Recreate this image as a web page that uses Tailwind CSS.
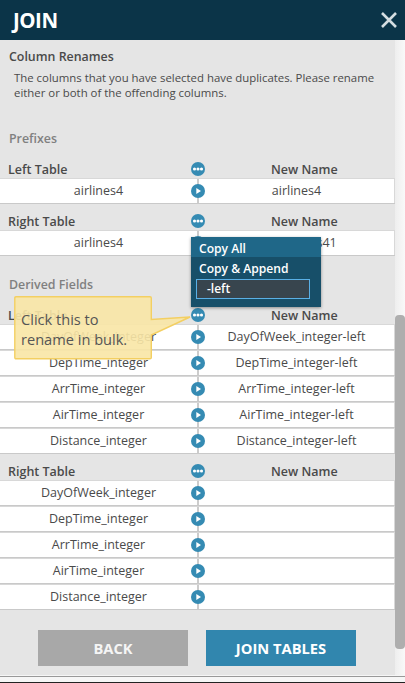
<!DOCTYPE html>
<html lang="en">
<head>
<meta charset="utf-8">
<title>Join</title>
<script src="https://cdn.jsdelivr.net/npm/@tailwindcss/browser@4"></script>
</head>
<body class="w-[405px] h-[683px] overflow-hidden bg-[#f4f4f4] font-['Open_Sans',sans-serif] text-[#4a4a4a]">
<div class="relative flex h-[683px] flex-col overflow-hidden">
  <header class="flex h-10 shrink-0 items-center justify-between bg-[#0b3448] pl-[13px] pr-[8px]">
    <h1 class="text-[20.5px] leading-10 font-bold tracking-[-0.5px] text-white">JOIN</h1>
    <svg class="h-4 w-4" viewBox="0 0 16 16" fill="none" stroke="#d5dde1" stroke-width="2.600"><path d="M1 1 15 15M15 1 1 15"/></svg>
  </header>
  <div class="flex h-[635px] shrink-0">
    <main class="h-[635px] w-[395px] shrink-0 bg-[#e5e5e5]">
      <h2 class="h-[30px] pl-[9px] pt-[7px] text-[12.4px] leading-5 font-semibold">Column Renames</h2>
      <p class="h-[52px] pl-[14px] pt-0 text-[11.4px] leading-[15px] whitespace-nowrap">The columns that you have selected have duplicates. Please rename<br>either or both of the offending columns.</p>
      <h3 class="h-[30px] pl-[9px] pt-[7px] text-[12.4px] leading-5 font-semibold text-[#808080]">Prefixes</h3>
      <div id="prefixes"></div>
      <h3 class="h-[42px] pl-[9px] pt-[19px] text-[12.4px] leading-5 font-semibold text-[#808080]">Derived Fields</h3>
      <div id="derived"></div>
      <div class="flex gap-[18px] pl-[38px] pt-5 text-[14.7px] leading-9 font-bold text-white">
        <button class="h-9 w-[150px] bg-[#a8a8a8] text-[#f5f5f5]">BACK</button>
        <button class="h-9 w-[150px] bg-[#3186ae]">JOIN TABLES</button>
      </div>
    </main>
    <div class="w-[10px] bg-linear-to-r from-[#eee] to-[#f9f9f9] pt-[275px]"><div class="h-[334px] rounded-[4px] bg-[#aeaeae]"></div></div>
  </div>
  <footer class="h-2 shrink-0 bg-[#f6f6f6] pt-px"><div class="h-px bg-[#999]"></div><div class="mt-[5px] h-px bg-[#222]"></div></footer>

  <!-- hint callout -->
  <svg class="absolute left-[14px] top-[296px] h-[64px] w-[180px]" viewBox="0 0 180 64"><path d="M2 .8H136Q137.300 .8 137.300 2V23.500L176 21 137.300 39V61.500Q137.300 62.800 136 62.800H2Q.8 62.800 .8 61.500V2Q.8 .8 2 .8Z" fill="#f8e6a6" fill-opacity=".91" stroke="#f3cf62" stroke-width="1.400"/></svg>
  <div class="absolute left-[21px] top-[309px] text-[14.6px] leading-5 whitespace-nowrap text-[#555]">Click this to<br>rename in bulk.</div>

  <!-- bulk rename menu -->
  <div class="absolute left-[191px] top-[237px] h-[70px] w-[130px] bg-[#174f69] text-[12.1px] leading-5 font-semibold text-white shadow-[0_1px_3px_rgba(0,0,0,.4)]">
    <div class="h-5 bg-[#1f6788] pl-2 pt-[2px]">Copy All</div>
    <div class="h-[22px] pl-2 pt-[2px]">Copy &amp; Append</div>
    <div class="ml-[5px] h-5 w-[114px] border border-[#5ab0e6] bg-[#38454e] pl-[10px] text-[12px] leading-[18px]">-left</div>
  </div>
</div>
<script>
const dots = '<svg class="absolute left-[191px] top-[10px] h-[14px] w-[14px]" viewBox="0 0 14 14"><circle cx="7" cy="7" r="7" fill="#358bb3"/><g fill="#fff"><circle cx="3.500" cy="7" r="1.550"/><circle cx="7" cy="7" r="1.550"/><circle cx="10.500" cy="7" r="1.550"/></g></svg>';
const play = '<svg class="absolute left-[191px] top-[5px] h-[14px] w-[14px]" viewBox="0 0 14 14"><circle cx="7" cy="7" r="7" fill="#358bb3"/><path d="M5.300 3.900 10 7 5.300 10.100Z" fill="#fff"/></svg>';
const head = t => `<div class="relative flex h-[26px] pt-[9px] text-[12.5px] leading-[18px] font-semibold"><div class="w-[271px] pl-2">${t}</div><div>New Name</div>${dots}</div>`;
const row = (a, b) => `<div class="relative flex h-[26px] border-t border-b border-t-[#d8d8d8] border-b-[#c9c9c9] bg-white text-center text-[12.5px] leading-[24px]"><div class="w-[197px]">${a}</div><div class="w-[2px] bg-[#ccc]"></div><div class="w-[196px] border-r border-[#d8d8d8]">${b}</div>${play}</div>`;
const names = ['DayOfWeek', 'DepTime', 'ArrTime', 'AirTime', 'Distance'].map(n => n + '_integer');
document.getElementById('prefixes').innerHTML = head('Left Table') + row('airlines4', 'airlines4') + head('Right Table') + row('airlines4', '<span class="pl-[24px]">airlines41</span>');
document.getElementById('derived').innerHTML = head('Left Table') + names.map(n => row(n, n + '-left')).join('') + head('Right Table') + names.map(n => row(n, '')).join('');
</script>
</body>
</html>
